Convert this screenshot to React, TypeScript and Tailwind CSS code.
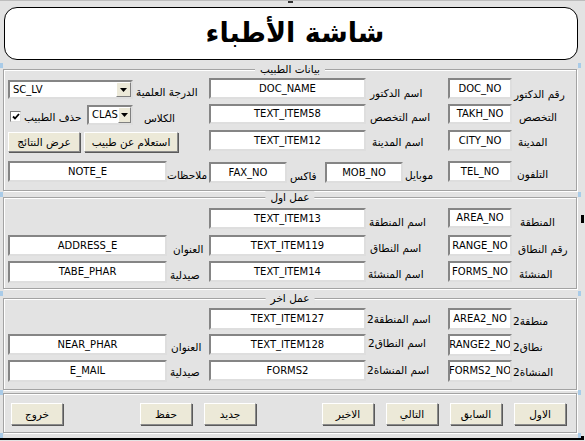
import React from "react";

const sunken =
  "bg-white border-2 border-t-[#858585] border-l-[#858585] border-b-[#dedede] border-r-[#dedede]";

function Field({
  w,
  h = "h-[21px]",
  mt = "",
  ml = "",
  text,
}: {
  w: string;
  h?: string;
  mt?: string;
  ml?: string;
  text: string;
}) {
  return (
    <div
      className={`${w} ${h} ${mt} ${ml} shrink-0 ${sunken} flex items-center justify-center text-[10px] leading-none text-black whitespace-nowrap overflow-hidden`}
    >
      {text}
    </div>
  );
}

function Label({
  w,
  pl = "",
  pt = "",
  text,
}: {
  w: string;
  pl?: string;
  pt?: string;
  text: string;
}) {
  return (
    <div
      dir="rtl"
      className={`${w} ${pl} ${pt} shrink-0 text-left text-[10.5px] leading-[13px] text-black whitespace-nowrap`}
    >
      {text}
    </div>
  );
}

function Select({
  w,
  h,
  mt,
  ml = "",
  text,
}: {
  w: string;
  h: string;
  mt: string;
  ml?: string;
  text: string;
}) {
  return (
    <div className={`${w} ${h} ${mt} ${ml} shrink-0 flex ${sunken}`}>
      <div className="flex-1 flex items-center pl-[3px] text-[10px] leading-none">
        {text}
      </div>
      <div className="w-[15px] h-full bg-[#ece9d8] border border-t-white border-l-white border-b-[#808080] border-r-[#808080] flex items-center justify-center">
        <svg width="7" height="4" viewBox="0 0 7 4">
          <path d="M0 0h7L3.5 4z" fill="#000" />
        </svg>
      </div>
    </div>
  );
}

function Btn({
  w,
  h = "h-[22px]",
  ml = "",
  mt = "",
  text,
}: {
  w: string;
  h?: string;
  ml?: string;
  mt?: string;
  text: string;
}) {
  return (
    <div
      className={`${w} ${h} ${ml} ${mt} shrink-0 bg-[#ece9d8] border border-t-white border-l-white border-b-[#8a8a8a] border-r-[#8a8a8a] shadow-[1px_1px_0_#5a5a5a] flex items-center justify-center text-[10.5px] leading-none text-black whitespace-nowrap`}
    >
      {text}
    </div>
  );
}

function Frame({
  title,
  h,
  mt,
  children,
}: {
  title?: string;
  h: string;
  mt: string;
  children: React.ReactNode;
}) {
  return (
    <div
      className={`relative ml-[3px] w-[574px] ${h} ${mt} shrink-0 border border-[#a3a3a3] shadow-[inset_1px_1px_0_#ffffff,1px_1px_0_#ffffff]`}
    >
      {title && (
        <div className="absolute -top-[7px] left-1/2 -translate-x-1/2 px-[5px] bg-[#e3e3e3] text-[10.5px] leading-[13px] whitespace-nowrap">
          {title}
        </div>
      )}
      {children}
    </div>
  );
}

function Mark({ cls }: { cls: string }) {
  return <div className={`absolute w-[3px] h-[5px] bg-[#a9cbe8] ${cls}`} />;
}

export default function App() {
  return (
    <div className="relative w-[585px] h-[441px] overflow-hidden bg-[#e3e3e3] font-['DejaVu_Sans',sans-serif] text-black border-t border-[#bdbdbd]">
      <div className="flex flex-col">
        {/* title */}
        <div className="ml-[4px] mt-[6px] w-[574px] h-[53px] shrink-0 bg-white border border-black rounded-[13px] flex items-center justify-center">
          <span dir="rtl" className="text-[27px] font-bold leading-none pb-[2px] pl-[8px]">
            شاشة الأطباء
          </span>
        </div>

        {/* doctor data */}
        <Frame title="بيانات الطبيب" h="h-[122px]" mt="mt-[9px]">
          <div className="flex items-start h-[26px] mt-[8px]">
            <Select w="w-[125px]" h="h-[19px]" mt="mt-[2px]" ml="ml-[4px]" text="SC_LV" />
            <Label w="w-[76px]" pl="pl-[3px]" pt="pt-[8px]" text="الدرجة العلمية" />
            <Field w="w-[157px]" text="DOC_NAME" />
            <Label w="w-[82px]" pl="pl-[4px]" pt="pt-[9px]" text="اسم الدكتور" />
            <Field w="w-[64px]" text="DOC_NO" />
            <Label w="w-[64px]" pl="pl-[2px]" pt="pt-[10px]" text="رقم الدكتور" />
          </div>

          <div className="flex items-start h-[26px]">
            <div className="ml-[6px] mt-[7px] w-[11px] h-[11px] shrink-0 bg-white border border-t-[#7a7a7a] border-l-[#7a7a7a] border-b-[#dedede] border-r-[#dedede] flex items-center justify-center">
              <svg width="8" height="7" viewBox="0 0 8 7">
                <path d="M1 3.5l2 2L7 1" stroke="#000" strokeWidth="1.8" fill="none" />
              </svg>
            </div>
            <Label w="w-[66px]" pl="pl-[3px]" pt="pt-[7px]" text="حذف الطبيب" />
            <Select w="w-[46px]" h="h-[20px]" mt="mt-[1px]" text="CLAS" />
            <Label w="w-[76px]" pl="pl-[11px]" pt="pt-[8px]" text="الكلاس" />
            <Field w="w-[157px]" h="h-[20px]" text="TEXT_ITEM58" />
            <Label w="w-[82px]" pl="pl-[4px]" pt="pt-[7px]" text="اسم التخصص" />
            <Field w="w-[64px]" h="h-[20px]" text="TAKH_NO" />
            <Label w="w-[64px]" pl="pl-[7px]" pt="pt-[7px]" text="التخصص" />
          </div>

          <div className="flex items-start h-[30px]">
            <Btn w="w-[72px]" h="h-[20px]" ml="ml-[4px]" mt="mt-[2px]" text="عرض النتائج" />
            <Btn w="w-[94px]" h="h-[20px]" ml="ml-[4px]" mt="mt-[2px]" text="استعلام عن طبيب" />
            <div className="w-[31px] shrink-0" />
            <Field w="w-[157px]" text="TEXT_ITEM12" />
            <Label w="w-[82px]" pl="pl-[6px]" pt="pt-[6px]" text="اسم المدينة" />
            <Field w="w-[64px]" text="CITY_NO" />
            <Label w="w-[64px]" pl="pl-[6px]" pt="pt-[6px]" text="المدينة" />
          </div>

          <div className="flex items-start h-[26px]">
            <Field w="w-[159px]" ml="ml-[4px]" mt="mt-[1px]" text="NOTE_E" />
            <Label w="w-[42px]" pt="pt-[9px]" text="ملاحظات" />
            <Field w="w-[78px]" mt="mt-[2px]" text="FAX_NO" />
            <Label w="w-[38px]" pl="pl-[3px]" pt="pt-[10px]" text="فاكس" />
            <Field w="w-[78px]" mt="mt-[2px]" text="MOB_NO" />
            <Label w="w-[45px]" pl="pl-[2px]" pt="pt-[9px]" text="موبايل" />
            <Field w="w-[64px]" mt="mt-[1px]" text="TEL_NO" />
            <Label w="w-[64px]" pl="pl-[5px]" pt="pt-[8px]" text="التلفون" />
          </div>
        </Frame>

        {/* first work */}
        <Frame title="عمل اول" h="h-[92px]" mt="mt-[6px]">
          <div className="flex items-start h-[27px] mt-[10px]">
            <Field w="w-[157px]" ml="ml-[205px]" text="TEXT_ITEM13" />
            <Label w="w-[82px]" pl="pl-[3px]" pt="pt-[8px]" text="اسم المنطقة" />
            <Field w="w-[64px]" h="h-[20px]" text="AREA_NO" />
            <Label w="w-[64px]" pl="pl-[8px]" pt="pt-[8px]" text="المنطقة" />
          </div>
          <div className="flex items-start h-[26px]">
            <Field w="w-[159px]" ml="ml-[4px]" text="ADDRESS_E" />
            <Label w="w-[42px]" pl="pl-[6px]" pt="pt-[8px]" text="العنوان" />
            <Field w="w-[157px]" text="TEXT_ITEM119" />
            <Label w="w-[82px]" pl="pl-[4px]" pt="pt-[7px]" text="اسم النطاق" />
            <Field w="w-[64px]" text="RANGE_NO" />
            <Label w="w-[64px]" pl="pl-[6px]" pt="pt-[8px]" text="رقم النطاق" />
          </div>
          <div className="flex items-start h-[26px]">
            <Field w="w-[159px]" h="h-[22px]" ml="ml-[4px]" text="TABE_PHAR" />
            <Label w="w-[42px]" pl="pl-[3px]" pt="pt-[8px]" text="صيدلية" />
            <Field w="w-[157px]" text="TEXT_ITEM14" />
            <Label w="w-[82px]" pl="pl-[2px]" pt="pt-[7px]" text="اسم المنشئة" />
            <Field w="w-[64px]" text="FORMS_NO" />
            <Label w="w-[64px]" pl="pl-[7px]" pt="pt-[7px]" text="المنشئة" />
          </div>
        </Frame>

        {/* other work */}
        <Frame title="عمل اخر" h="h-[92px]" mt="mt-[9px]">
          <div className="flex items-start h-[26px] mt-[9px]">
            <Field w="w-[157px]" h="h-[22px]" ml="ml-[205px]" text="TEXT_ITEM127" />
            <Label w="w-[82px]" pl="pl-[1px]" pt="pt-[5px]" text="اسم المنطقة2" />
            <Field w="w-[64px]" h="h-[22px]" text="AREA2_NO" />
            <Label w="w-[64px]" pl="pl-[1px]" pt="pt-[7px]" text="منطقة2" />
          </div>
          <div className="flex items-start h-[26px]">
            <Field w="w-[159px]" ml="ml-[4px]" text="NEAR_PHAR" />
            <Label w="w-[42px]" pl="pl-[4px]" pt="pt-[7px]" text="العنوان" />
            <Field w="w-[157px]" text="TEXT_ITEM128" />
            <Label w="w-[82px]" pl="pl-[2px]" pt="pt-[3px]" text="اسم النطاق2" />
            <Field w="w-[64px]" h="h-[22px]" text="RANGE2_NO" />
            <Label w="w-[64px]" pl="pl-[1px]" pt="pt-[7px]" text="نطاق2" />
          </div>
          <div className="flex items-start h-[26px]">
            <Field w="w-[159px]" h="h-[22px]" ml="ml-[4px]" text="E_MAIL" />
            <Label w="w-[42px]" pl="pl-[3px]" pt="pt-[6px]" text="صيدلية" />
            <Field w="w-[157px]" text="FORMS2" />
            <Label w="w-[82px]" pl="pl-[1px]" pt="pt-[4px]" text="اسم المنشاة2" />
            <Field w="w-[64px]" h="h-[22px]" text="FORMS2_NO" />
            <Label w="w-[64px]" pl="pl-[1px]" pt="pt-[6px]" text="المنشاة2" />
          </div>
        </Frame>

        {/* buttons */}
        <Frame h="h-[40px]" mt="mt-[3px]">
          <div className="flex items-start mt-[9px]">
            <Btn w="w-[52px]" ml="ml-[7px]" text="خروج" />
            <Btn w="w-[52px]" ml="ml-[77px]" text="حفظ" />
            <Btn w="w-[52px]" ml="ml-[12px]" text="جديد" />
            <Btn w="w-[52px]" ml="ml-[66px]" text="الاخير" />
            <Btn w="w-[52px]" ml="ml-[12px]" text="التالي" />
            <Btn w="w-[52px]" ml="ml-[12px]" text="السابق" />
            <Btn w="w-[52px]" ml="ml-[12px]" text="الاول" />
          </div>
        </Frame>
      </div>

      {/* canvas edge marks */}
      <div className="absolute left-0 top-[437px] w-[583px] h-[2px] bg-black" />
      <div className="absolute left-[288px] top-0 w-[5px] h-[2px] bg-[#333]" />
      <div className="absolute left-[581px] top-[214px] w-[3px] h-[8px] bg-black" />
      <div className="absolute left-[580px] top-[435px] w-[4px] h-[4px] bg-black" />
      <Mark cls="left-0 top-[62px]" />
      <Mark cls="left-0 top-[191px]" />
      <Mark cls="left-0 top-[290px]" />
      <Mark cls="left-0 top-[389px]" />
      <Mark cls="left-0 top-[432px]" />
      <Mark cls="left-[578px] top-[62px]" />
      <Mark cls="left-[578px] top-[191px]" />
      <Mark cls="left-[578px] top-[290px]" />
      <Mark cls="left-[578px] top-[389px]" />
      <Mark cls="left-[578px] top-[432px]" />
    </div>
  );
}
